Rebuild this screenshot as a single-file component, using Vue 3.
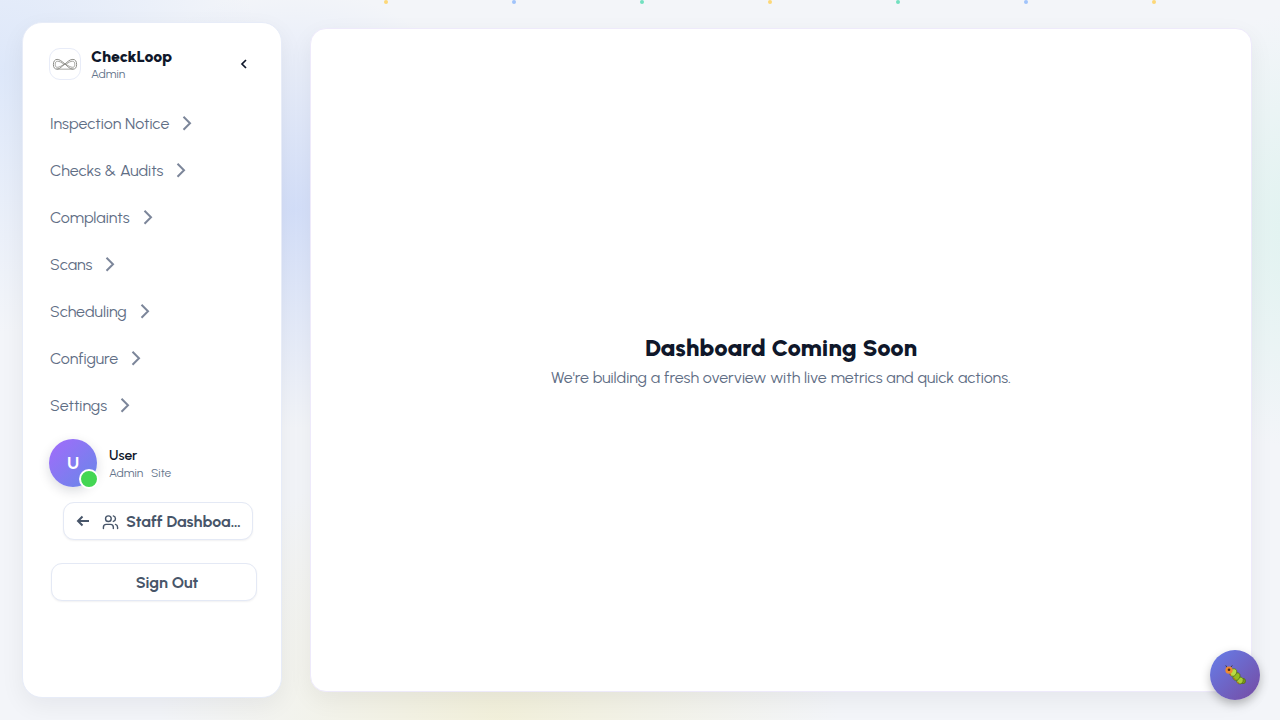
<script setup>
const items = ['Inspection Notice', 'Checks & Audits', 'Complaints', 'Scans', 'Scheduling', 'Configure', 'Settings']
const dots = ['#fdd778', '#a0c3fb', '#72e0c0', '#fdd778', '#72e0c0', '#a0c3fb', '#fdd778']
</script>

<template>
  <div class="page">
    <div class="dots" aria-hidden="true">
      <i v-for="(color, i) in dots" :key="i" class="dot" :style="{ left: 30 + i * 10 + '%', background: color }"></i>
    </div>

    <aside class="sidebar">
      <header class="brand">
        <span class="logo">
          <svg width="26" height="13" viewBox="0 0 28 14" fill="none" stroke="#85857f">
            <path d="M14 6.5C10 3 8 1.500 5.500 1.500C2.800 1.500 1.500 4 1.500 7S2.500 12 5.500 12C9 12 11 8 14 6.500C17 4 19 1.500 22.500 1.500C25.500 1.500 26.500 4 26.500 7S25.500 12 22.500 12C19 12 17 9 14 6.500Z" />
            <path d="M13 7C10 4.500 8 3.500 6 3.500C4 3.500 3.500 5 3.500 7S4 10 6 10C8 10 10 8.500 13 7M15 7C18 4.500 20 3.500 22 3.500C24 3.500 24.500 5 24.500 7S24 10 22 10C20 10 18 8.500 15 7M5 12H23" stroke-width=".8" />
          </svg>
        </span>
        <div class="brand-text">
          <strong class="brand-name">CheckLoop</strong>
          <span class="small">Admin</span>
        </div>
        <button class="collapse" type="button" aria-label="Collapse sidebar">
          <svg width="16" height="16" viewBox="0 0 16 16" fill="none" stroke="#0f172a" stroke-width="1.700"><path d="M10 4L6 8l4 4" /></svg>
        </button>
      </header>

      <nav class="nav" aria-label="Main">
        <a v-for="item in items" :key="item" class="nav-item" href="#">
          <span>{{ item }}</span>
          <svg width="10" height="16" viewBox="0 0 10 16" fill="none" stroke="#7c869a" stroke-width="2"><path d="M1.500 .8L8 7.300l-6.500 6.500" /></svg>
        </a>
      </nav>

      <div class="user">
        <div class="avatar">U<span class="status"></span></div>
        <div class="user-text">
          <strong class="user-name">User</strong>
          <span class="roles small"><span>Admin</span><span>Site</span></span>
        </div>
      </div>

      <button class="action staff" type="button">
        <svg class="back" width="14" height="14" viewBox="0 0 14 14" fill="none" stroke="currentColor" stroke-width="2"><path d="M13 7H2M6.500 2.500L2 7l4.500 4.500" /></svg>
        <svg class="people" width="17" height="17" viewBox="0 0 24 24" fill="none" stroke="currentColor" stroke-width="2" stroke-linecap="round" stroke-linejoin="round">
          <path d="M16 22v-2a4 4 0 0 0-4-4H6a4 4 0 0 0-4 4v2" /><circle cx="9" cy="8" r="4" /><path d="M22 22v-2a4 4 0 0 0-3-3.870M16 4.130a4 4 0 0 1 0 7.750" />
        </svg>
        <span class="label">Staff Dashboard</span>
      </button>
      <button class="action signout" type="button">Sign Out</button>
    </aside>

    <main class="panel">
      <h1>Dashboard Coming Soon</h1>
      <p>We're building a fresh overview with live metrics and quick actions.</p>
    </main>

    <button class="bug" type="button" aria-label="Report a bug">
      <svg width="24" height="24" viewBox="0 0 24 24">
        <g fill="none" stroke="#3f3a3b" stroke-linecap="round"><path d="M4 4.500L3 2.800M8 4L9 2.800" /></g>
        <g stroke="#4a6110" stroke-width=".6">
          <ellipse cx="20" cy="18" rx="2.500" ry="2.700" fill="#7d9c18" />
          <ellipse cx="17" cy="17.500" rx="3.200" ry="3.600" fill="#a9cf38" transform="rotate(25 17 17.500)" />
          <ellipse cx="13.500" cy="13.500" rx="3.300" ry="4" fill="#94bd20" transform="rotate(25 13.500 13.500)" />
          <ellipse cx="10.300" cy="9.500" rx="3.200" ry="4" fill="#b9dc45" transform="rotate(25 10.300 9.500)" />
        </g>
        <circle cx="6" cy="7.200" r="3.600" fill="#f08a2e" />
        <circle cx="6" cy="6.800" r="1.300" fill="#50280e" />
        <path d="M7 11l1 1.500M11 15l1 1.500M14.500 19l1 1" stroke="#c8661c" stroke-width="1.200" />
      </svg>
    </button>
  </div>
</template>

<style>
body { margin: 0; }
</style>

<style scoped>
.page {
  box-sizing: border-box;
  min-height: 100vh;
  display: grid;
  grid-template-columns: 260px minmax(0, 1fr);
  gap: 28px;
  padding: 22px 28px 22px 22px;
  position: relative;
  overflow: hidden;
  font-family: Urbanist, Lato, sans-serif;
  font-size: 16px;
  color: #0f172a;
  background:
    radial-gradient(circle at 23% 29%, rgba(175, 197, 250, .46), transparent 220px),
    radial-gradient(circle at 0% 10%, rgba(200, 218, 250, .5), transparent 260px),
    radial-gradient(ellipse 340px 280px at 39% 100%, rgba(240, 234, 188, .5), transparent),
    radial-gradient(circle at 103% 32%, rgba(200, 240, 228, .45), transparent 220px),
    #f3f5f9;
}
.dots { position: absolute; inset: 0 0 auto; height: 4px; }
.dot { position: absolute; top: 0; width: 4px; height: 4px; border-radius: 50%; }
.sidebar {
  box-sizing: border-box;
  display: flex;
  flex-direction: column;
  padding: 25px 24px 24px 26px;
  border: 1px solid #e7ecf8;
  border-radius: 20px;
  background: #fff;
  box-shadow: 0 8px 24px rgba(15, 23, 42, .06);
}
.brand { display: flex; align-items: center; gap: 10px; height: 32px; }
.logo {
  box-sizing: border-box;
  width: 32px;
  height: 32px;
  display: grid;
  place-items: center;
  border: 1px solid #e8ecf8;
  border-radius: 11px;
}
.brand-text, .user-text { display: flex; flex-direction: column; padding-top: 2px; }
.brand-name { font-weight: 900; line-height: 18px; }
.small { font-size: 12px; line-height: 16px; color: #64748b; }
button { font: inherit; cursor: pointer; }
.collapse {
  margin-left: auto;
  width: 26px;
  height: 24px;
  padding: 0;
  display: grid;
  place-items: center;
  border: 0;
  background: none;
}
.nav { display: flex; flex-direction: column; margin-top: 20px; }
.nav-item {
  display: flex;
  align-items: center;
  gap: 13px;
  height: 47px;
  padding-left: 1px;
  color: #5f6e85;
  text-decoration: none;
}
.user { display: flex; align-items: center; gap: 12px; margin-top: 10px; }
.avatar {
  position: relative;
  width: 48px;
  height: 48px;
  display: grid;
  place-items: center;
  border-radius: 50%;
  color: #fff;
  font-size: 18px;
  font-weight: 700;
  background: linear-gradient(135deg, #a36bfb, #6688e8);
  box-shadow: 0 4px 12px rgba(15, 23, 42, .15);
}
.status {
  position: absolute;
  right: -2px;
  bottom: -2px;
  width: 16px;
  height: 16px;
  border: 2px solid #fff;
  border-radius: 50%;
  background: #43d653;
}
.user-name { font-size: 14px; line-height: 18px; font-weight: 600; }
.roles { display: flex; gap: 8px; }
.action {
  box-sizing: border-box;
  height: 38px;
  display: flex;
  align-items: center;
  border: 1px solid #e4e9f5;
  border-radius: 11px;
  background: #fff;
  color: #475569;
  font-weight: 700;
  box-shadow: 0 1px 2px rgba(15, 23, 42, .06);
}
.staff { margin: 15px 4px 0 14px; padding: 0 10px 0 12px; }
.back { flex: none; margin-right: 12px; }
.people { flex: none; margin-right: 7px; }
.label { overflow: hidden; text-overflow: ellipsis; white-space: nowrap; }
.signout { justify-content: center; margin: 23px 0 0 2px; padding: 0 0 0 26px; }
.panel {
  box-sizing: border-box;
  display: flex;
  flex-direction: column;
  align-items: center;
  justify-content: center;
  margin: 6px 0;
  padding: 28px 24px 24px;
  border: 1px solid #eeeafb;
  border-radius: 16px;
  background: #fff;
  text-align: center;
  box-shadow: 0 8px 24px rgba(15, 23, 42, .06);
}
h1 { margin: 0; font-size: 24px; line-height: 32px; font-weight: 900; }
p { margin: 0; line-height: 28px; color: #5f6e85; }
.bug {
  position: absolute;
  right: 20px;
  bottom: 20px;
  width: 50px;
  height: 50px;
  padding: 0;
  display: grid;
  place-items: center;
  border: 0;
  border-radius: 50%;
  background: linear-gradient(135deg, #667eea, #764ba2);
  box-shadow: 0 4px 10px rgba(0, 0, 0, .25);
}
</style>
